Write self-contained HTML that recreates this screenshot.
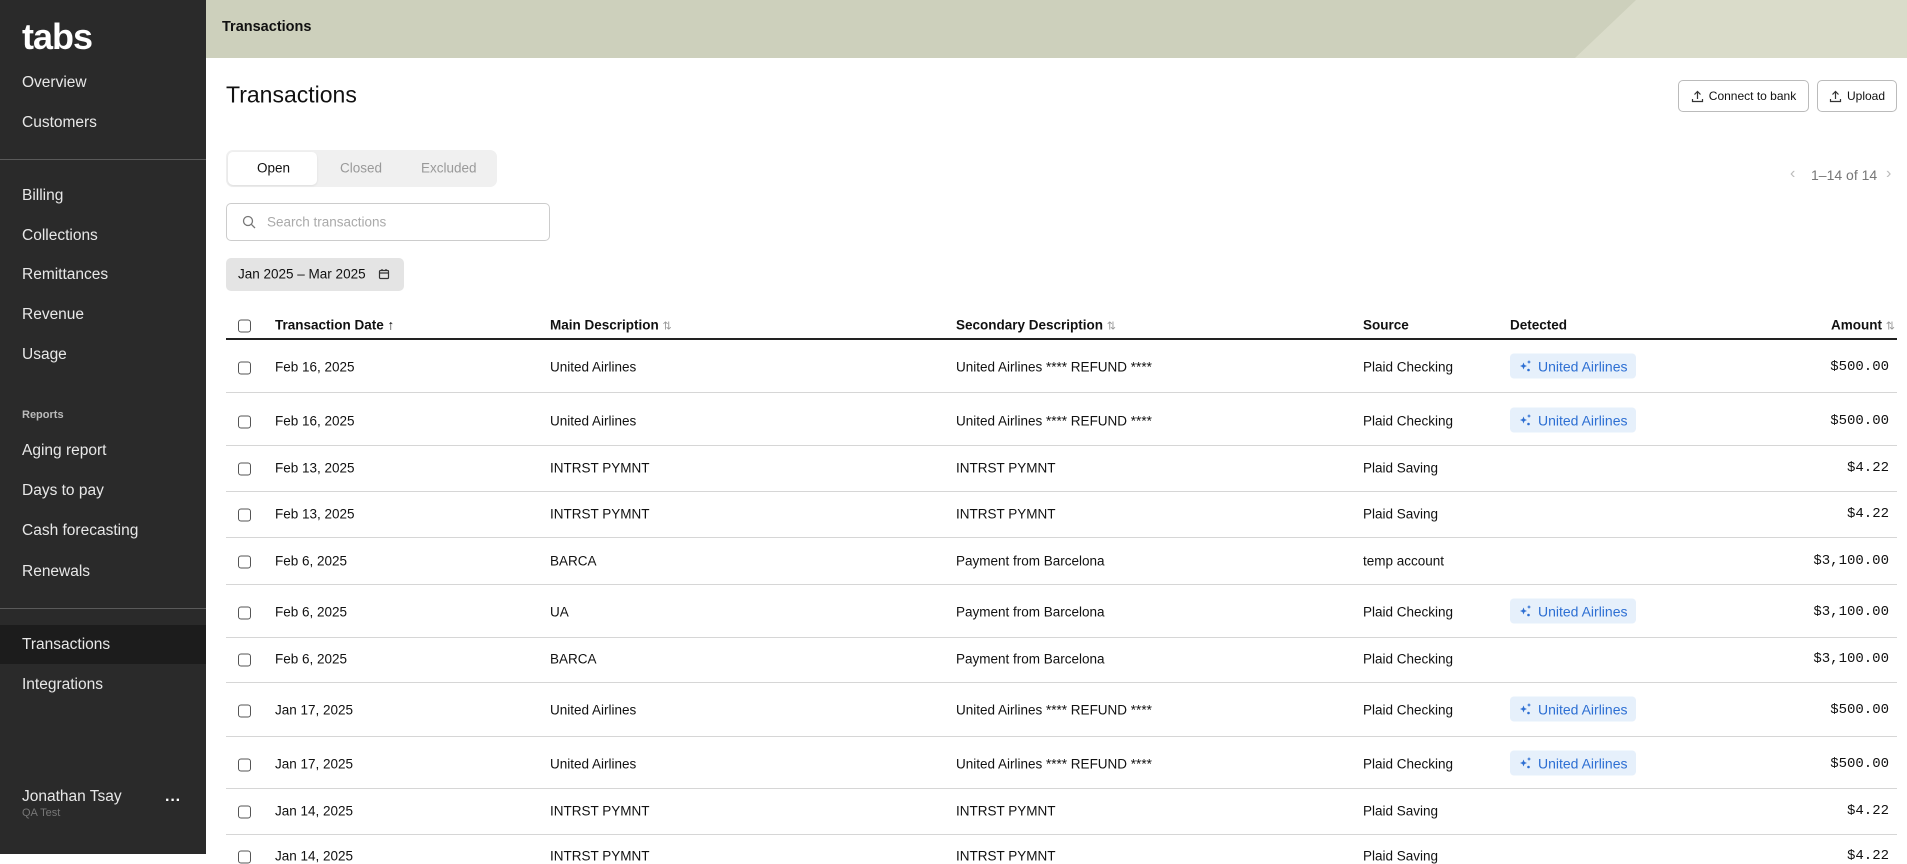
<!DOCTYPE html>
<html><head><meta charset="utf-8"><style>
*{box-sizing:border-box;margin:0;padding:0}
body{width:1907px;height:854px;overflow:hidden;font-family:"Liberation Sans",sans-serif;background:#fff;position:relative;color:#111}
.sb{position:absolute;left:0;top:0;width:206px;height:854px;background:#2a2a2a;color:#e8e8e8}
.sb .it{position:absolute;left:22px;font-size:15.5px;transform:translateY(-50%);white-space:nowrap}
.sb .hl{position:absolute;left:0;width:206px;top:625px;height:39px;background:#1c1c1c}
.sb .dv{position:absolute;left:0;width:206px;height:1px;background:#5a5a5a}
.hd{position:absolute;left:206px;top:0;width:1701px;height:58px;background:#cdd0bc;overflow:hidden}
.a{position:absolute;transform:translateY(-50%);white-space:nowrap}
.btn{position:absolute;border:1px solid #bbb;border-radius:5px;height:32px;top:80px;font-size:12px;display:flex;align-items:center;justify-content:center;gap:5px}
.cb{position:absolute;left:238px;width:13px;height:13px;border:1.3px solid #555;border-radius:3px;transform:translateY(-50%)}
.rl{position:absolute;left:226px;width:1671px;height:1px;background:#d6d6d6}
.row{font-size:13.5px}
.badge{position:absolute;left:1510px;height:25px;width:126px;background:#e6f0fb;border-radius:4px;color:#2d6fd3;font-size:14px;display:flex;align-items:center;padding-left:9px;gap:6px;transform:translateY(-50%)}
.amt{position:absolute;right:18px;font-family:"Liberation Mono",monospace;font-size:14px;transform:translateY(-50%)}
.th{font-size:13.5px;font-weight:bold}
</style></head><body>
<div class="sb">
<div class="it" style="top:37px;font-size:36px;font-weight:bold;color:#fff;letter-spacing:-1px">tabs</div>
<div class="it" style="top:83px">Overview</div>
<div class="it" style="top:123px">Customers</div>
<div class="dv" style="top:159px"></div>
<div class="it" style="top:196px">Billing</div>
<div class="it" style="top:236px">Collections</div>
<div class="it" style="top:275px">Remittances</div>
<div class="it" style="top:315px">Revenue</div>
<div class="it" style="top:355px">Usage</div>
<div class="it" style="top:415px;font-size:11px;font-weight:bold;color:#bbb">Reports</div>
<div class="it" style="top:451px">Aging report</div>
<div class="it" style="top:491px">Days to pay</div>
<div class="it" style="top:531px">Cash forecasting</div>
<div class="it" style="top:572px">Renewals</div>
<div class="dv" style="top:608px"></div>
<div class="hl"></div>
<div class="it" style="top:645px">Transactions</div>
<div class="it" style="top:685px">Integrations</div>
<div class="it" style="top:797px">Jonathan Tsay</div>
<div class="it" style="top:813px;font-size:11px;color:#777">QA Test</div>
<div class="it" style="top:801px;left:165px;font-weight:bold;font-size:16px;color:#fff">···</div>
</div>
<div class="hd"><svg width="1701" height="58" style="position:absolute;left:0;top:0"><polygon points="1430,0 1701,0 1701,58 1369,58" fill="#dadcca"/></svg>
<div class="a" style="left:16px;top:27px;font-size:14.5px;font-weight:bold">Transactions</div></div>
<div class="a" style="left:226px;top:95px;font-size:23px">Transactions</div>
<div class="btn" style="left:1678px;width:131px"><svg width="13" height="13" viewBox="0 0 13 13" fill="none" stroke="#333" stroke-width="1.2"><path d="M6.5 9V1.5M3.5 4.5l3-3 3 3M1.5 9v2.5h10V9"/></svg>Connect to bank</div>
<div class="btn" style="left:1817px;width:80px"><svg width="13" height="13" viewBox="0 0 13 13" fill="none" stroke="#333" stroke-width="1.2"><path d="M6.5 9V1.5M3.5 4.5l3-3 3 3M1.5 9v2.5h10V9"/></svg>Upload</div>
<div style="position:absolute;left:226px;top:150px;width:271px;height:37px;background:#f0f0f0;border-radius:7px"></div>
<div style="position:absolute;left:228px;top:152px;width:89px;height:33px;background:#fff;border-radius:5px;box-shadow:0 1px 2px rgba(0,0,0,.08)"></div>
<div class="a" style="left:257px;top:168px;font-size:13.5px">Open</div>
<div class="a" style="left:340px;top:168px;font-size:13.5px;color:#999">Closed</div>
<div class="a" style="left:421px;top:168px;font-size:13.5px;color:#999">Excluded</div>
<div class="a" style="left:1790px;top:174px;color:#bbb;font-size:16px">‹</div>
<div class="a" style="left:1811px;top:175px;font-size:14px;color:#777">1–14 of 14</div>
<div class="a" style="left:1886px;top:174px;color:#bbb;font-size:16px">›</div>
<div style="position:absolute;left:226px;top:203px;width:324px;height:38px;border:1px solid #ccc;border-radius:5px"></div>
<svg style="position:absolute;left:242px;top:215px" width="14" height="14" viewBox="0 0 14 14" fill="none" stroke="#777" stroke-width="1.3"><circle cx="6" cy="6" r="4.5"/><path d="M9.3 9.3L13 13"/></svg>
<div class="a" style="left:267px;top:222px;font-size:13.5px;color:#aaa">Search transactions</div>
<div style="position:absolute;left:226px;top:258px;width:178px;height:33px;background:#e4e4e4;border-radius:5px"></div>
<div class="a" style="left:238px;top:274px;font-size:13.5px">Jan 2025 – Mar 2025</div>
<svg style="position:absolute;left:378px;top:268px" width="12" height="12" viewBox="0 0 12 12" fill="none" stroke="#333" stroke-width="1.2"><rect x="1.5" y="2.5" width="9" height="8" rx="1"/><path d="M1.5 5h9M4 1v2M8 1v2"/></svg>
<div class="cb" style="top:326px"></div>
<div class="a th" style="left:275px;top:325px">Transaction Date <span style="font-weight:normal">↑</span></div>
<div class="a th" style="left:550px;top:325px">Main Description <span style="font-weight:normal;color:#999;font-size:11px">⇅</span></div>
<div class="a th" style="left:956px;top:325px">Secondary Description <span style="font-weight:normal;color:#999;font-size:11px">⇅</span></div>
<div class="a th" style="left:1363px;top:325px">Source</div>
<div class="a th" style="left:1510px;top:325px">Detected</div>
<div class="a th" style="right:12px;top:325px">Amount <span style="font-weight:normal;color:#999;font-size:11px">⇅</span></div>
<div style="position:absolute;left:226px;top:338px;width:1671px;height:2px;background:#222"></div>
<div id="rows"></div>
<script>
const R=[[367,"Feb 16, 2025","United Airlines","United Airlines **** REFUND ****","Plaid Checking",1,"$500.00"],
[421,"Feb 16, 2025","United Airlines","United Airlines **** REFUND ****","Plaid Checking",1,"$500.00"],
[468,"Feb 13, 2025","INTRST PYMNT","INTRST PYMNT","Plaid Saving",0,"$4.22"],
[514,"Feb 13, 2025","INTRST PYMNT","INTRST PYMNT","Plaid Saving",0,"$4.22"],
[561,"Feb 6, 2025","BARCA","Payment from Barcelona","temp account",0,"$3,100.00"],
[612,"Feb 6, 2025","UA","Payment from Barcelona","Plaid Checking",1,"$3,100.00"],
[659,"Feb 6, 2025","BARCA","Payment from Barcelona","Plaid Checking",0,"$3,100.00"],
[710,"Jan 17, 2025","United Airlines","United Airlines **** REFUND ****","Plaid Checking",1,"$500.00"],
[764,"Jan 17, 2025","United Airlines","United Airlines **** REFUND ****","Plaid Checking",1,"$500.00"],
[811,"Jan 14, 2025","INTRST PYMNT","INTRST PYMNT","Plaid Saving",0,"$4.22"],
[856,"Jan 14, 2025","INTRST PYMNT","INTRST PYMNT","Plaid Saving",0,"$4.22"]];
const L=[392,445,491,537,584,637,682,736,788,834];
let h="";
for(const r of R){const y=r[0];
h+=`<div class="cb" style="top:${y+1}px"></div><div class="a row" style="left:275px;top:${y}px">${r[1]}</div><div class="a row" style="left:550px;top:${y}px">${r[2]}</div><div class="a row" style="left:956px;top:${y}px">${r[3]}</div><div class="a row" style="left:1363px;top:${y}px">${r[4]}</div><div class="amt" style="top:${y}px">${r[6]}</div>`;
if(r[5])h+=`<div class="badge" style="top:${y-1}px"><svg width="13" height="13" viewBox="0 0 13 13" fill="#2d6fd3"><path d="M4.5 3l1 2.5 2.5 1-2.5 1-1 2.5-1-2.5-2.5-1 2.5-1z"/><path d="M10 0.5l.6 1.4 1.4.6-1.4.6-.6 1.4-.6-1.4-1.4-.6 1.4-.6z"/><circle cx="9.5" cy="10.5" r="1.3"/></svg>United Airlines</div>`;}
for(const y of L)h+=`<div class="rl" style="top:${y}px"></div>`;
document.getElementById("rows").innerHTML=h;
</script>
</body></html>
